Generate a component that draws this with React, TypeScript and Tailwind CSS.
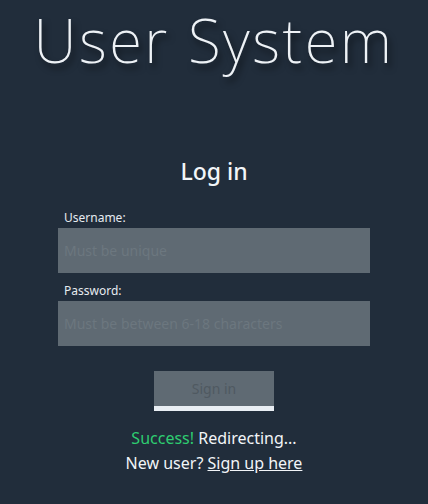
export default function App() {
  return (
    <div
      className="min-h-[504px] w-full bg-[#212d3b] text-white flex flex-col items-center"
      style={{ fontFamily: "'Noto Sans', 'Open Sans', sans-serif" }}
    >
      {/* Title */}
      <h1 className="text-[60px] leading-[80px] font-extralight tracking-[2.5px] text-[#eef2f6] [text-shadow:3px_5px_6px_rgba(0,0,0,0.55)]">
        User System
      </h1>

      {/* Form */}
      <div className="mt-[76px] w-[312px] flex flex-col">
        <h2 className="text-center text-[23px] leading-[30px] font-medium text-[#f2f5f8]">
          Log in
        </h2>

        <label className="mt-[24px] ml-[6px] text-[12px] leading-[16px] text-[#e6ebf0]">
          Username:
        </label>
        <input
          placeholder="Must be unique"
          className="mt-[2px] h-[45px] w-full bg-[#5f6a73] px-[6px] text-[14px] text-white placeholder:text-[#6c777f] outline-none"
        />

        <label className="mt-[10px] ml-[6px] text-[12px] leading-[16px] text-[#e6ebf0]">
          Password:
        </label>
        <input
          type="password"
          placeholder="Must be between 6-18 characters"
          className="mt-[2px] h-[45px] w-full bg-[#5f6a73] px-[6px] text-[14px] text-white placeholder:text-[#6c777f] outline-none"
        />

        <button className="mt-[25px] mx-auto h-[40px] w-[120px] bg-[#5f6a73] border-b-[5px] border-[#e9eef3] text-[14px] text-[#4f5961]">
          Sign in
        </button>

        <p className="mt-[15px] text-center text-[16px] leading-[24px] text-[#f2f5f8]">
          <span className="text-[#2ecc71]">Success!</span> Redirecting...
        </p>
        <p className="mt-[1px] text-center text-[16px] leading-[24px] text-[#f2f5f8]">
          New user? <a href="#" className="underline">Sign up here</a>
        </p>
      </div>
    </div>
  );
}
